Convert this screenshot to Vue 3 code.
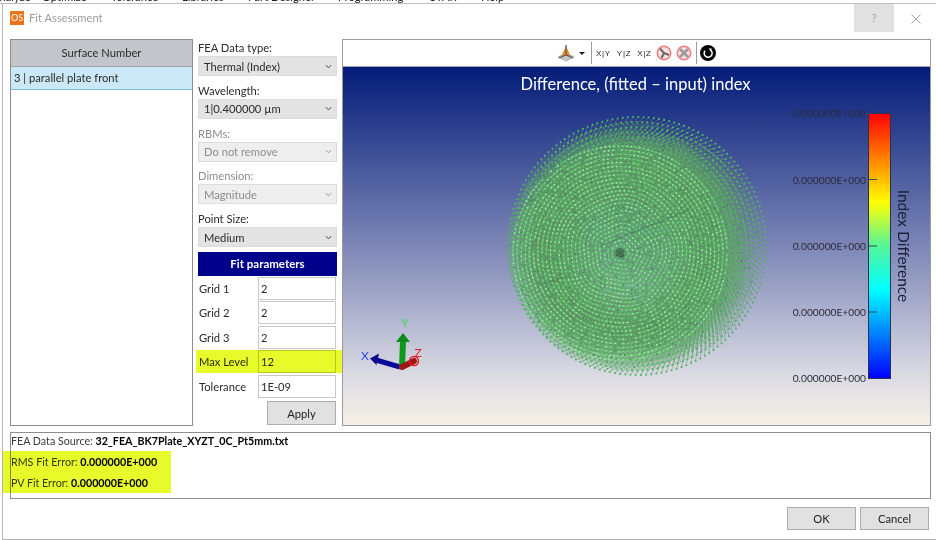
<script setup>
import { computed } from 'vue'

const menus = [
  { t: 'Analyze', w: 50, o: -8 },
  { t: 'Optimize', w: 69 },
  { t: 'Tolerance', w: 71 },
  { t: 'Libraries', w: 66 },
  { t: 'Part Designer', w: 90 },
  { t: 'Programming', w: 92 },
  { t: 'STAR', w: 51 },
  { t: 'Help', w: 40 }
]

const selects = [
  { label: 'FEA Data type:', value: 'Thermal (Index)' },
  { label: 'Wavelength:', value: '1|0.400000 µm' },
  { label: 'RBMs:', value: 'Do not remove', off: true },
  { label: 'Dimension:', value: 'Magnitude', off: true },
  { label: 'Point Size:', value: 'Medium' }
]

const fields = [
  { label: 'Grid 1', value: '2' },
  { label: 'Grid 2', value: '2' },
  { label: 'Grid 3', value: '2' },
  { label: 'Max Level', value: '12', mark: true },
  { label: 'Tolerance', value: '1E-09' }
]

const ticks = [113, 179.5, 246, 312, 378]

// Point cloud: a polar mesh on nested layers, from the small near face to the wide far face.
const layers = 5
const rings = 26
const place = (layer, ring, k) => {
  const f = layer / (layers - 1)
  const cx = 620 + 17 * f
  const cy = 253 - 7 * f
  const R = 107 + 22 * f
  const n = 6 * ring
  const a = (k / n) * Math.PI * 2 + ring * 0.035 * (1 + layer * 0.45)
  const u = ring / rings
  const wobble = 1 + 0.08 * Math.cos(5 * a + 0.6) * Math.max(0, 1 - u * 1.4)
  const r = R * u * wobble
  return [cx + r * Math.cos(a), cy + r * Math.sin(a)]
}

const cloud = computed(() => {
  const dots = Array.from({ length: layers }, () => [])
  const bright = []
  const dark = []
  let rods = ''
  let ties = ''
  let seed = 7
  const next = () => {
    seed = (seed * 16807) % 2147483647
    return seed / 2147483647
  }
  for (let l = 0; l < layers; l++) {
    for (let i = 1; i <= rings; i++) {
      const n = 6 * i
      for (let k = 0; k < n; k++) {
        const [x, y] = place(l, i, k)
        const dot = `M${x.toFixed(1)} ${y.toFixed(1)}h0`
        const roll = next()
        if (l === 0 && roll < 0.45) bright.push(dot)
        else if (l < layers - 1 && roll > 0.9) dark.push(dot)
        else dots[l].push(dot)
        if (l === 0) {
          const [bx, by] = place(layers - 1, i, k)
          rods += `M${x.toFixed(1)} ${y.toFixed(1)}L${bx.toFixed(1)} ${by.toFixed(1)}`
          if (i > 1) {
            const [nx, ny] = place(l, i, (k + 1) % n)
            ties += `M${x.toFixed(1)} ${y.toFixed(1)}L${nx.toFixed(1)} ${ny.toFixed(1)}`
          }
        }
      }
    }
  }
  return {
    rods,
    ties,
    back: dots[layers - 1].join(''),
    mid: dots.slice(1, layers - 1).map((d) => d.join('')).join(''),
    front: dots[0].join(''),
    bright: bright.join(''),
    dark: dark.join('')
  }
})
</script>

<template>
  <div class="screen">
    <div class="menu">
      <span
        v-for="m in menus"
        :key="m.t"
        class="menu-item"
        :style="{ width: m.w + 'px', marginLeft: (m.o || 0) + 'px' }"
      >{{ m.t }}</span>
    </div>

    <div class="dialog">
      <header class="titlebar">
        <span class="app-icon">OS</span>
        <span class="title">Fit Assessment</span>
        <span class="help">?</span>
        <svg class="close" viewBox="0 0 10 10" width="10" height="10">
          <path d="M0.5 0.5L9.5 9.5M9.5 0.5L0.5 9.5" stroke="#9a9a9a" stroke-width="0.9" fill="none" />
        </svg>
      </header>

      <main class="main">
        <section class="list">
          <div class="list-head">Surface Number</div>
          <div class="list-row">3 | parallel plate front</div>
        </section>

        <section class="controls">
          <div v-for="s in selects" :key="s.label" class="group" :class="{ off: s.off }">
            <div class="group-label">{{ s.label }}</div>
            <div class="select">
              <span>{{ s.value }}</span>
              <svg viewBox="0 0 8 5" width="7" height="5">
                <path d="M1 1L4 4L7 1" fill="none" stroke="currentColor" stroke-width="1" />
              </svg>
            </div>
          </div>

          <div class="fit-head">Fit parameters</div>
          <div class="fields">
            <div v-for="f in fields" :key="f.label" class="field" :class="{ marked: f.mark }">
              <label>{{ f.label }}</label>
              <input :value="f.value" readonly />
            </div>
          </div>
          <button class="apply" type="button">Apply</button>
        </section>

        <section class="view">
          <div class="toolbar">
            <svg class="tool-view" viewBox="0 0 20 18" width="20" height="18">
              <path d="M2 13L10 9L18 13L10 17Z" fill="#c9c9c9" stroke="#8a8a8a" stroke-width="0.6" />
              <path d="M10 2L15 13L10 11L5 13Z" fill="#e88a22" />
              <path d="M10 1L10 11M3 14L10 11L17 14" stroke="#5c5c5c" stroke-width="1.3" fill="none" />
            </svg>
            <svg class="caret" viewBox="0 0 6 3" width="6" height="3"><path d="M0 0H6L3 3Z" fill="#222" /></svg>
            <i class="sep"></i>
            <span class="planes"><b>X|Y</b><b>Y|Z</b><b>X|Z</b></span>
            <svg class="round" viewBox="0 0 16 16" width="16" height="16">
              <circle cx="8" cy="8" r="6.7" fill="#fbe0e0" stroke="#f08080" stroke-width="1.6" />
              <path d="M8 8L4 3.5M8 8L13 10M8 8L5.5 13" stroke="#6f6f6f" stroke-width="2.2" fill="none" />
            </svg>
            <svg class="round" viewBox="0 0 16 16" width="16" height="16">
              <circle cx="8" cy="8" r="6.7" fill="#fbe0e0" stroke="#f08080" stroke-width="1.6" />
              <path d="M4 4L12 12M12 4L4 12" stroke="#9a9a9a" stroke-width="2.6" fill="none" />
            </svg>
            <i class="sep last"></i>
            <svg class="round" viewBox="0 0 16 16" width="16" height="16">
              <circle cx="8" cy="8" r="8" fill="#050505" />
              <path d="M5 5.8A4 4 0 1 0 10.5 5" fill="none" stroke="#fff" stroke-width="1.5" />
              <path d="M8.8 3.4L11.8 3.6L10.6 6.4Z" fill="#fff" />
            </svg>
          </div>

          <svg class="plot" viewBox="343 67 587 358" preserveAspectRatio="none">
            <defs>
              <linearGradient id="sky" x1="0" y1="0" x2="0" y2="1">
                <stop offset="0" stop-color="#031c78" />
                <stop offset="0.5" stop-color="#7d86b6" />
                <stop offset="0.85" stop-color="#d8d8e2" />
                <stop offset="1" stop-color="#f6f1e6" />
              </linearGradient>
              <linearGradient id="rainbow" x1="0" y1="0" x2="0" y2="1">
                <stop offset="0" stop-color="#ff0000" />
                <stop offset="0.335" stop-color="#ffff00" />
                <stop offset="0.5" stop-color="#55f59a" />
                <stop offset="0.665" stop-color="#00ffff" />
                <stop offset="1" stop-color="#0000ff" />
              </linearGradient>
              <radialGradient id="core">
                <stop offset="0" stop-color="#5ba868" stop-opacity="0.6" />
                <stop offset="0.85" stop-color="#62b46c" stop-opacity="0.55" />
                <stop offset="1" stop-color="#62b46c" stop-opacity="0" />
              </radialGradient>
            </defs>
            <rect x="343" y="67" width="587" height="358" fill="url(#sky)" />

            <text x="635.5" y="90" class="plot-title" text-anchor="middle">Difference, (fitted – input) index</text>

            <ellipse cx="628" cy="250" rx="122" ry="124" fill="url(#core)" />
            <path :d="cloud.rods" stroke="#5f9468" stroke-opacity="0.6" stroke-width="0.8" fill="none" />
            <path :d="cloud.back" stroke="#4fb85e" stroke-width="2.1" stroke-linecap="round" fill="none" />
            <path :d="cloud.mid" stroke="#58b862" stroke-opacity="0.85" stroke-width="1.5" stroke-linecap="round" fill="none" />
            <path :d="cloud.ties" stroke="#b6ecb6" stroke-opacity="0.35" stroke-width="0.7" fill="none" />
            <path :d="cloud.front" stroke="#6cdc74" stroke-width="1.8" stroke-linecap="round" fill="none" />
            <path :d="cloud.dark" stroke="#3c7a4c" stroke-opacity="0.8" stroke-width="1.5" stroke-linecap="round" fill="none" />
            <path :d="cloud.bright" stroke="#8ef094" stroke-width="1.9" stroke-linecap="round" fill="none" />
            <path d="M690 209L600 246M571 275L540 285" stroke="#3e6a4c" stroke-opacity="0.35" stroke-width="1.6" fill="none" />
            <circle cx="620" cy="253" r="5" fill="#2c4a34" fill-opacity="0.55" />

            <!-- colour bar -->
            <rect x="868.5" y="113.5" width="22" height="265" fill="url(#rainbow)" stroke="#2a2f55" stroke-width="1" />
            <g v-for="t in ticks" :key="t">
              <text x="866" :y="t + 4" class="tick" text-anchor="end">0.000000E+000</text>
            </g>
            <path d="M868 179.5h9M868 246h9M868 312h9" stroke="#2c3a4a" stroke-width="0.9" />
            <text class="bar-name" transform="translate(898 246) rotate(90)" text-anchor="middle">Index Difference</text>

            <!-- axis triad -->
            <path d="M400 367L376 360" stroke="#0a0a9a" stroke-width="5" />
            <path d="M370 358.5L379 353.5L376.5 365Z" fill="#0a0a8c" />
            <path d="M402 368L403 341" stroke="#0d9a1a" stroke-width="6" />
            <path d="M403 333L410 342H396Z" fill="#0d8a18" />
            <path d="M402 367L414 361" stroke="#a01414" stroke-width="6" stroke-linecap="round" />
            <circle cx="414" cy="361" r="4.5" fill="none" stroke="#e02020" stroke-width="1.5" />
            <text x="405" y="327" class="axis" fill="#3ce05a" text-anchor="middle">Y</text>
            <text x="365" y="360" class="axis" fill="#3347e6" text-anchor="middle">X</text>
            <text x="418" y="357" class="axis" fill="#e22222" text-anchor="middle">Z</text>
          </svg>
        </section>
      </main>

      <section class="info">
        <div>FEA Data Source: <b>32_FEA_BK7Plate_XYZT_0C_Pt5mm.txt</b></div>
        <div>RMS Fit Error: <b>0.000000E+000</b></div>
        <div>PV Fit Error: <b>0.000000E+000</b></div>
        <i class="info-mark"></i>
      </section>

      <footer class="actions">
        <button type="button">OK</button>
        <button type="button">Cancel</button>
      </footer>
    </div>
  </div>
</template>

<style scoped>
.screen {
  width: 936px;
  height: 540px;
  overflow: hidden;
  background: #fff;
  display: flex;
  flex-direction: column;
  font-family: "Lato", "Open Sans", sans-serif;
  font-size: 11.2px;
  color: #2b2b2b;
}
.menu {
  height: 3px;
  flex: none;
  display: flex;
  align-items: flex-end;
  overflow: hidden;
  border-bottom: 1px solid #bdbdbd;
}
.menu-item {
  flex: none;
  font-size: 11.2px;
  line-height: 13px;
  height: 13px;
  color: #222;
}
.dialog {
  flex: 1;
  min-height: 0;
  margin-left: 2px;
  border-left: 1px solid #b4b4b4;
  border-bottom: 1px solid #b4b4b4;
  display: flex;
  flex-direction: column;
}
.titlebar {
  height: 35px;
  flex: none;
  display: flex;
  align-items: center;
  padding: 0 15px 0 7px;
}
.app-icon {
  width: 14px;
  height: 14px;
  background: #e8741e;
  color: #fff;
  font-size: 9px;
  line-height: 14px;
  text-align: center;
  box-sizing: border-box;
  margin-right: 5px;
  margin-top: -8px;
}
.title {
  color: #9a9a9a;
  flex: 1;
  margin-top: -8px;
}
.help {
  width: 40px;
  height: 28px;
  background: #e1e1e1;
  color: #a9a9a9;
  text-align: center;
  line-height: 28px;
  font-size: 12px;
  margin-top: -7px;
  margin-right: 17px;
}
.close {
  margin-top: -6px;
}
.main {
  height: 387px;
  flex: none;
  display: flex;
  padding-left: 7px;
  padding-right: 5px;
}
.list {
  width: 183px;
  flex: none;
  box-sizing: border-box;
  border: 1px solid #8e8e8e;
  background: #fff;
}
.list-head {
  height: 26px;
  background: #c3c5cb;
  border-bottom: 1px solid #9aa0a8;
  text-align: center;
  line-height: 26px;
}
.list-row {
  height: 23px;
  line-height: 22px;
  padding-left: 3px;
  box-sizing: border-box;
  background: #cbe8f6;
  border-bottom: 1px solid #7cc0e0;
}
.controls {
  width: 139px;
  flex: none;
  margin-left: 5px;
  margin-right: 5px;
  display: flex;
  flex-direction: column;
}
.group {
  height: 42.8px;
  flex: none;
}
.group-label {
  height: 17px;
  line-height: 17px;
}
.select {
  height: 20px;
  box-sizing: border-box;
  background: #e3e3e3;
  border: 1px solid #dcdcdc;
  display: flex;
  align-items: center;
  justify-content: space-between;
  padding: 0 4px 0 5px;
}
.group.off .group-label {
  color: #8d8d8d;
}
.group.off .select {
  background: #eeeeee;
  color: #8d8d8d;
}
.fit-head {
  height: 24px;
  margin-top: -1px;
  flex: none;
  background: #00008b;
  color: #fff;
  font-weight: 700;
  font-size: 11.5px;
  text-align: center;
  line-height: 24px;
}
.fields {
  margin-top: 1px;
  display: flex;
  flex-direction: column;
  gap: 1.5px;
}
.field {
  height: 23px;
  display: flex;
  align-items: center;
  padding-left: 1px;
  position: relative;
}
.field label {
  width: 59px;
  flex: none;
}
.field input {
  width: 78px;
  height: 23px;
  box-sizing: border-box;
  border: 1px solid #c9c9c9;
  outline: none;
  padding: 0 0 0 2px;
  font: inherit;
  color: #2b2b2b;
  background: #fff;
}
.field.marked::after {
  content: "";
  position: absolute;
  left: -2px;
  right: -5px;
  top: 0;
  bottom: 0;
  background: #e8fb2a;
  mix-blend-mode: multiply;
}
.apply {
  align-self: flex-end;
  width: 69px;
  height: 24px;
  margin: 3.5px 1px 0 0;
  font: inherit;
  color: #222;
  background: #e1e1e1;
  border: 1px solid #adadad;
  padding: 0;
}
.view {
  flex: 1;
  min-width: 0;
  box-sizing: border-box;
  border: 1px solid #9a9a9a;
  display: flex;
  flex-direction: column;
}
.toolbar {
  height: 27px;
  flex: none;
  box-sizing: border-box;
  display: flex;
  align-items: center;
  padding-left: 213px;
  background: #fff;
  border-bottom: 1px solid #a6a6a6;
}
.caret {
  margin-left: 3px;
}
.sep {
  width: 1px;
  height: 22px;
  background: #9c9c9c;
  margin: 0 4px 0 6px;
}
.sep.last {
  margin: 0 3px 0 0;
}
.planes {
  display: flex;
  gap: 6px;
  margin-right: 4px;
}
.planes b {
  font-family: "Liberation Sans", sans-serif;
  font-weight: 400;
  font-size: 8px;
  letter-spacing: 0.7px;
  color: #222;
}
.round {
  margin-right: 4px;
  flex: none;
}
.sep.last + .round {
  margin-right: 0;
}
.plot {
  flex: 1;
  min-height: 0;
  width: 100%;
  display: block;
}
.plot-title {
  font-size: 16.5px;
  fill: #fff;
}
.tick {
  font-size: 10.2px;
  fill: #2a2b3c;
}
.bar-name {
  font-size: 15.5px;
  fill: #1a1f3a;
}
.axis {
  font-size: 12px;
}
.info {
  height: 67px;
  flex: none;
  margin: 6px 5px 0 7px;
  box-sizing: border-box;
  border: 1px solid #8e8e8e;
  position: relative;
  font-size: 10.7px;
}
.info div {
  height: 21px;
  line-height: 15px;
  color: #3a3a3a;
}
.info b {
  color: #000;
  font-weight: 700;
}
.info-mark {
  position: absolute;
  left: -8px;
  top: 18px;
  width: 168px;
  height: 42px;
  background: #e8fb2a;
  mix-blend-mode: multiply;
}
.actions {
  flex: 1;
  display: flex;
  justify-content: flex-end;
  align-items: flex-start;
  gap: 4px;
  padding: 8px 7px 0 0;
}
.actions button {
  width: 69px;
  height: 23px;
  box-sizing: border-box;
  background: #e1e1e1;
  border: 1px solid #adadad;
  font: inherit;
  color: #222;
  padding: 0;
}
</style>
